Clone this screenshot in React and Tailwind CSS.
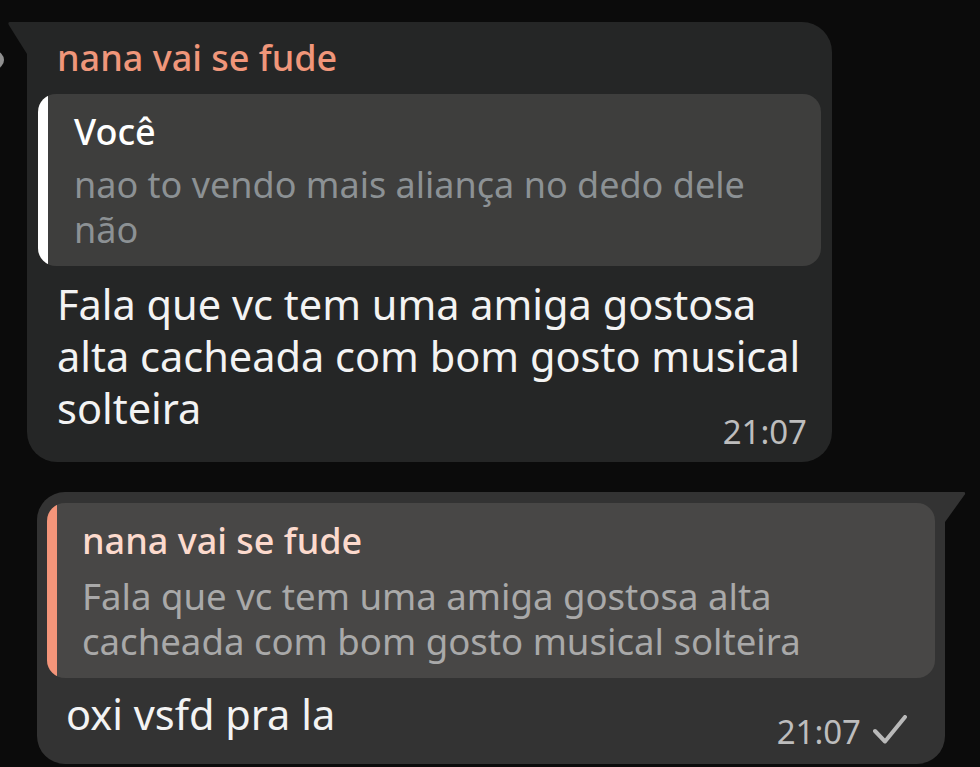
function Check() {
  return (
    <svg width="34" height="30" viewBox="0 0 34 30" fill="none" className="mb-[7px] ml-[12px]">
      <path d="M2 16 L12 26.5 L32 2" stroke="#b9b9b9" strokeWidth="4" strokeLinecap="round" strokeLinejoin="round" />
    </svg>
  );
}

function Quote({ bar, bg, name, nameColor, textColor, lines, pl, gap, size }) {
  return (
    <div className={`rounded-[18px] overflow-hidden flex ${bg}`}>
      <div className={`w-[10px] shrink-0 ${bar}`} />
      <div className={`pt-[15px] pb-[14px] whitespace-nowrap ${pl}`}>
        <div className={`text-[36px] leading-[46px] font-medium ${nameColor}`}>{name}</div>
        <div className={`${gap} ${size} leading-[45px] ${textColor}`}>
          {lines.map((l) => (
            <div key={l}>{l}</div>
          ))}
        </div>
      </div>
    </div>
  );
}

export default function App() {
  return (
    <div className="relative h-[767px] overflow-hidden bg-[#0b0b0b] font-['Noto_Sans',sans-serif] text-[#f3f3f3]">
      <div className="absolute -left-[14px] top-[51px] w-[18px] h-[18px] rounded-full bg-[#8f8f8f]" />

      <div className="flex pt-[22px] pl-[8px]">
        <svg width="19" height="34" viewBox="0 0 19 34" className="shrink-0">
          <path d="M2 0 H19 V32 L0.8 3 Q-0.5 0 2 0 Z" fill="#252626" />
        </svg>
        <div className="w-[805px] bg-[#252626] rounded-r-[30px] rounded-bl-[30px] px-[11px] pt-[12px] pb-[10px]">
          <div className="pl-[19px] text-[36px] leading-[48px] font-medium text-[#f0967a]">nana vai se fude</div>
          <div className="mt-[12px]">
            <Quote
              bar="bg-white"
              bg="bg-[#3e3e3d]"
              name="Você"
              nameColor="text-white"
              textColor="text-[#8c9194]"
              lines={["nao to vendo mais aliança no dedo dele", "não"]}
              pl="pl-[26px]"
              gap="mt-[7px]"
              size="text-[36px]"
            />
          </div>
          <div className="mt-[12px] pl-[19px] text-[41.5px] leading-[52px] whitespace-nowrap">
            <div>Fala que vc tem uma amiga gostosa</div>
            <div>alta cacheada com bom gosto musical</div>
            <div>solteira</div>
          </div>
          <div className="-mt-[22px] flex justify-end pr-[14px]">
            <div className="text-[33px] leading-[40px] text-[#bdbdbd]">21:07</div>
          </div>
        </div>
      </div>

      <div className="flex mt-[30px] pl-[37px]">
        <div className="w-[908px] bg-[#333333] rounded-l-[28px] rounded-br-[28px] px-[10px] pt-[11px] pb-[12px]">
          <Quote
            bar="bg-[#f4957a]"
            bg="bg-[#484746]"
            name="nana vai se fude"
            nameColor="text-[#fcdacd]"
            textColor="text-[#a9a9a9]"
            lines={["Fala que vc tem uma amiga gostosa alta", "cacheada com bom gosto musical solteira"]}
            pl="pl-[25px]"
            gap="mt-[10px]"
            size="text-[36.6px]"
          />
          <div className="mt-[10px] pl-[19px] text-[41.5px] leading-[52px] whitespace-nowrap">oxi vsfd pra la</div>
          <div className="-mt-[28px] flex justify-end items-end pr-[28px]">
            <div className="text-[33px] leading-[40px] text-[#bdbdbd]">21:07</div>
            <Check />
          </div>
        </div>
        <svg width="21" height="32" viewBox="0 0 21 32" className="shrink-0">
          <path d="M0 0 H18.5 Q21 0 19.8 2.5 L0 30 Z" fill="#333333" />
        </svg>
      </div>
    </div>
  );
}
